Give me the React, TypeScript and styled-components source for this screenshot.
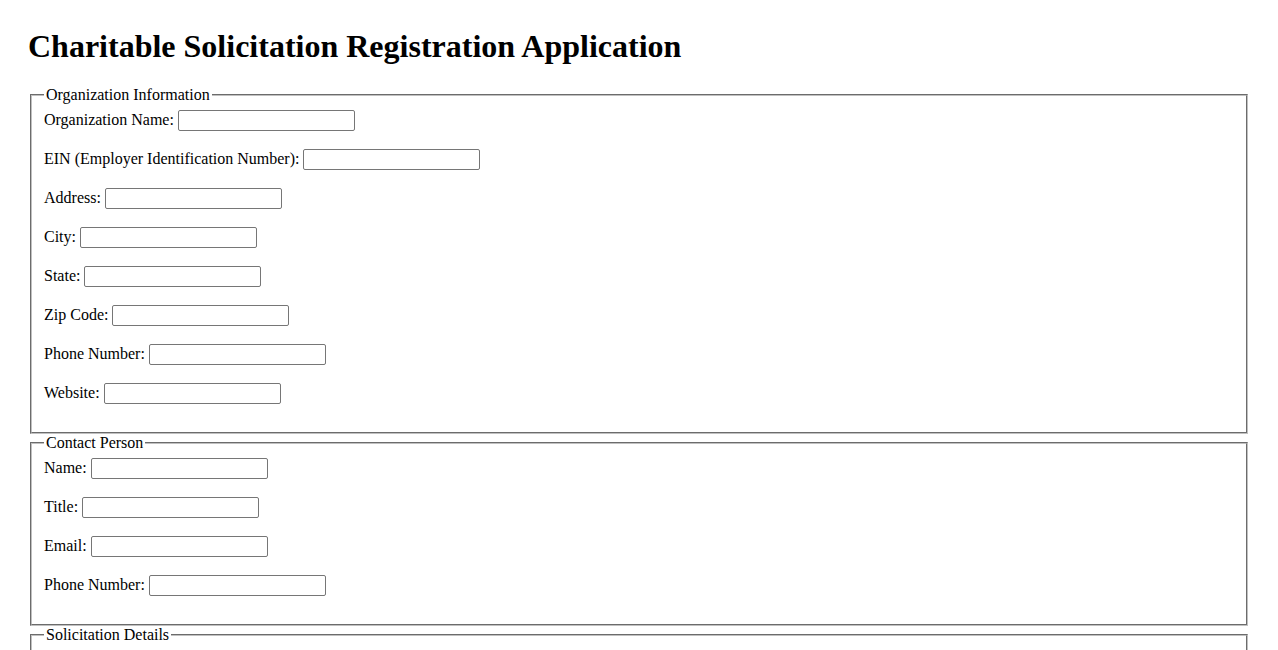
import React from "react";
import styled, { createGlobalStyle } from "styled-components";

const GlobalStyle = createGlobalStyle`
  body {
    margin: 0;
    background: #fff;
    color: #000;
    font-family: "Liberation Serif", "Times New Roman", serif;
    font-size: 16px;
  }
`;

const Page = styled.div`
  padding: 28px;
`;

const Title = styled.h1`
  font-size: 32px;
  font-weight: bold;
  margin: 0 0 21px 0;
`;

const Section = styled.fieldset`
  margin: 0 2px;
  padding: 6px 12px 10px;
  border: 2px groove #c0c0c0;
`;

const Legend = styled.legend`
  padding: 0 2px;
`;

const Row = styled.div`
  margin-bottom: 18px;
`;

const Field = styled.input`
  box-sizing: border-box;
  width: 177px;
  height: 21px;
  padding: 1px 2px;
  border: 1px solid #767676;
  border-radius: 2px;
  font: 13.333px "Liberation Sans", Arial, sans-serif;
  vertical-align: baseline;
`;

type Group = { legend: string; fields: string[] };

const groups: Group[] = [
  {
    legend: "Organization Information",
    fields: [
      "Organization Name",
      "EIN (Employer Identification Number)",
      "Address",
      "City",
      "State",
      "Zip Code",
      "Phone Number",
      "Website",
    ],
  },
  {
    legend: "Contact Person",
    fields: ["Name", "Title", "Email", "Phone Number"],
  },
  {
    legend: "Solicitation Details",
    fields: [
      "Purpose of Solicitation",
      "Solicitation Start Date",
      "Solicitation End Date",
      "Estimated Amount to be Raised",
    ],
  },
];

export default function App() {
  return (
    <>
      <GlobalStyle />
      <Page>
        <Title>Charitable Solicitation Registration Application</Title>
        <form>
          {groups.map((g) => (
            <Section key={g.legend}>
              <Legend>{g.legend}</Legend>
              {g.fields.map((f) => (
                <Row key={f}>
                  <label>{f}:</label> <Field type="text" />
                </Row>
              ))}
            </Section>
          ))}
        </form>
      </Page>
    </>
  );
}
